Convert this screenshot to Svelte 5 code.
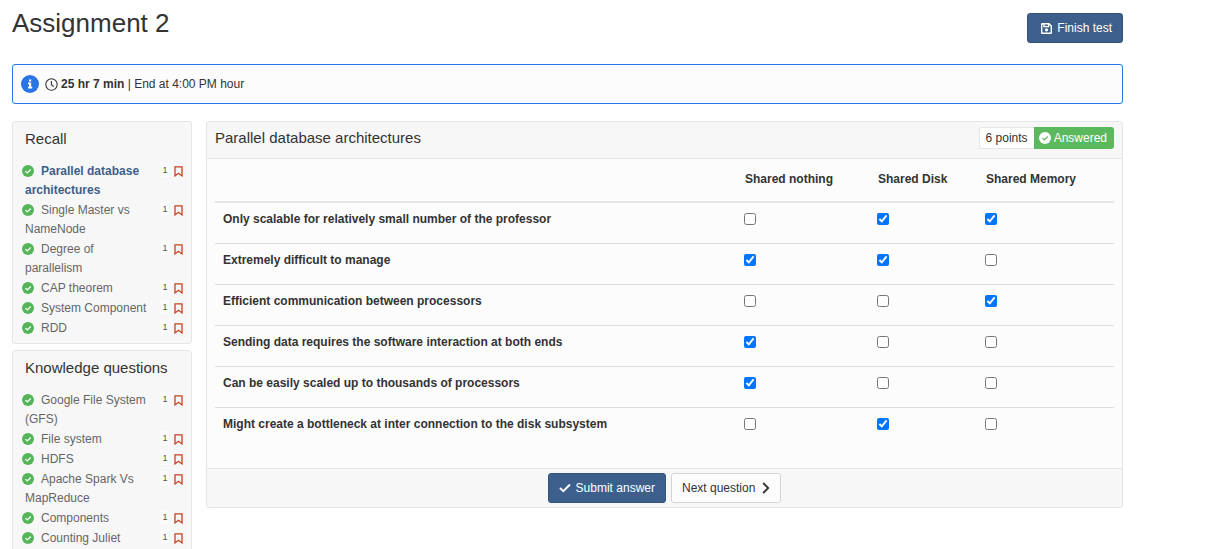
<script>
  const groups = [
    {
      title: 'Recall',
      items: [
        'Parallel database architectures',
        'Single Master vs NameNode',
        'Degree of parallelism',
        'CAP theorem',
        'System Component',
        'RDD'
      ]
    },
    {
      title: 'Knowledge questions',
      items: [
        'Google File System (GFS)',
        'File system',
        'HDFS',
        'Apache Spark Vs MapReduce',
        'Components',
        'Counting Juliet'
      ]
    }
  ];
  const current = 'Parallel database architectures';

  const options = ['Shared nothing', 'Shared Disk', 'Shared Memory'];
  let rows = $state([
    { label: 'Only scalable for relatively small number of the professor', marks: [false, true, true] },
    { label: 'Extremely difficult to manage', marks: [true, true, false] },
    { label: 'Efficient communication between processors', marks: [false, false, true] },
    { label: 'Sending data requires the software interaction at both ends', marks: [true, false, false] },
    { label: 'Can be easily scaled up to thousands of processors', marks: [true, false, false] },
    { label: 'Might create a bottleneck at inter connection to the disk subsystem', marks: [false, true, false] }
  ]);
</script>

{#snippet checkCircle(cls, disc, tick)}
  <svg class={cls} viewBox="0 0 12 12" aria-hidden="true">
    <circle cx="6" cy="6" r="6" fill={disc} />
    <path d="M3.4 6.1 5.3 7.9 8.7 4.5" fill="none" stroke={tick} stroke-width="1.3" />
  </svg>
{/snippet}

<div class="page">
  <header class="top">
    <h1>Assignment 2</h1>
    <button class="btn primary finish" type="button">
      <svg width="11" height="11" viewBox="0 0 11 11" fill="none" stroke="currentColor" stroke-width="1.4" aria-hidden="true">
        <path d="M.7 1.2q0-.5.5-.5H8l2.3 2.3v6.8q0 .5-.5.5H1.2q-.5 0-.5-.5z" />
        <path d="M3 .8v2.8h4.6V.8" />
        <circle cx="5.5" cy="6.9" r="1.2" fill="currentColor" stroke-width="1" />
      </svg>
      <span>Finish test</span>
    </button>
  </header>

  <div class="notice">
    <svg class="info" viewBox="0 0 18 18" aria-hidden="true">
      <circle cx="9" cy="9" r="9" fill="#2a75e6" />
      <path d="M8 4.5h2.2v2H8zM7 7.6h3.2v4.2h1v1.6H7v-1.6h1V9.2H7z" fill="#fff" />
    </svg>
    <svg class="clock" viewBox="0 0 13 13" fill="none" stroke="#333" aria-hidden="true">
      <circle cx="6.5" cy="6.5" r="5.7" stroke-width="1.1" />
      <path d="M6.4 3v3.8l2.3 1.7" stroke-width="1.1" />
    </svg>
    <span><b>25 hr 7 min</b> | End at 4:00 PM hour</span>
  </div>

  <div class="columns">
    <nav class="side" aria-label="Questions">
      {#each groups as group}
        <section class="panel group">
          <h2>{group.title}</h2>
          <ul>
            {#each group.items as item}
              <li>
                <a href="#question" class:current={item === current}>{@render checkCircle('done', '#55b559', '#fff')}{item}</a>
                <span class="count">1</span>
                <svg class="bookmark" viewBox="0 0 9 11" aria-hidden="true">
                  <path d="M1 .9h7v9L4.5 7.3 1 9.9z" fill="none" stroke="#c5431f" stroke-width="1.3" />
                </svg>
              </li>
            {/each}
          </ul>
        </section>
      {/each}
    </nav>

    <main class="panel question">
      <div class="head">
        <h2>Parallel database architectures</h2>
        <div class="status">
          <span class="points">6 points</span>
          <span class="answered">{@render checkCircle('mark', '#fff', '#5cb85c')}Answered</span>
        </div>
      </div>

      <div class="body">
        <table>
          <thead>
            <tr>
              <td></td>
              {#each options as option}
                <th scope="col">{option}</th>
              {/each}
            </tr>
          </thead>
          <tbody>
            {#each rows as row}
              <tr>
                <th scope="row">{row.label}</th>
                {#each options as option, i}
                  <td><input type="checkbox" aria-label={`${row.label}: ${option}`} bind:checked={row.marks[i]} /></td>
                {/each}
              </tr>
            {/each}
          </tbody>
        </table>
      </div>

      <footer class="actions">
        <button class="btn primary" type="button">
          <svg width="12" height="10" viewBox="0 0 12 10" aria-hidden="true">
            <path d="M1 5 4.3 8.2 11 1.5" fill="none" stroke="currentColor" stroke-width="2" />
          </svg>
          <span>Submit answer</span>
        </button>
        <button class="btn plain" type="button">
          <span>Next question</span>
          <svg width="8" height="12" viewBox="0 0 8 12" aria-hidden="true">
            <path d="M1.2 1 6.2 6 1.2 11" fill="none" stroke="currentColor" stroke-width="1.8" />
          </svg>
        </button>
      </footer>
    </main>
  </div>
</div>

<style>
  :global(body) {
    background: #fff;
  }
  .page {
    box-sizing: border-box;
    padding: 8px 95px 0 12px;
    font: 12px/18px "Liberation Sans", Arial, sans-serif;
    color: #333;
  }
  h1, h2, ul {
    margin: 0;
    padding: 0;
    font-weight: 400;
  }
  h1 {
    font-size: 26px;
    line-height: 30px;
  }
  h2 {
    font-size: 15px;
    line-height: 18px;
  }
  .top {
    display: flex;
    justify-content: space-between;
    align-items: flex-start;
  }
  .btn {
    display: inline-flex;
    align-items: center;
    gap: 5px;
    box-sizing: border-box;
    height: 30px;
    padding: 0 10px;
    border: 1px solid #34547c;
    border-radius: 3px;
    font: inherit;
    cursor: pointer;
  }
  .primary {
    background: #3d5f8c;
    color: #fff;
  }
  .plain {
    gap: 7px;
    background: #fcfcfc;
    border-color: #d4d4d4;
    color: #333;
  }
  .finish {
    margin-top: 5px;
    padding: 0 10px 0 13px;
  }
  .notice {
    display: flex;
    align-items: center;
    box-sizing: border-box;
    min-height: 40px;
    margin-top: 21px;
    padding: 0 8px;
    border: 1px solid #2a75e6;
    border-radius: 3px;
    background: #fcfcfc;
  }
  .info {
    width: 18px;
    height: 18px;
    margin-right: 6px;
  }
  .clock {
    width: 13px;
    height: 13px;
    margin-right: 3px;
  }
  .columns {
    display: grid;
    grid-template-columns: 180px minmax(0, 1fr);
    gap: 14px;
    align-items: start;
    margin-top: 17px;
  }
  .panel {
    border: 1px solid #e6e6e6;
    border-radius: 3px;
    background: #f7f7f7;
  }
  .side {
    display: grid;
    gap: 6px;
  }
  .group {
    padding: 8px 8px 4px 12px;
  }
  .group h2 {
    margin-bottom: 14px;
  }
  ul {
    list-style: none;
  }
  li {
    display: flex;
    align-items: flex-start;
    padding-bottom: 1px;
  }
  a {
    flex: 1;
    min-width: 0;
    padding-right: 12px;
    line-height: 19px;
    color: #666;
    text-decoration: none;
  }
  .current {
    color: #3d5f8c;
    font-weight: 700;
  }
  .done {
    width: 12px;
    height: 12px;
    margin: 0 7px 0 -3px;
    vertical-align: -2px;
  }
  .count {
    width: 8px;
    margin: 1px 5px 0 0;
    background: #fbfbfb;
    font-size: 9px;
    line-height: 14px;
    text-align: center;
    color: #555;
  }
  .bookmark {
    width: 9px;
    height: 11px;
    margin-top: 4px;
  }
  .head {
    display: flex;
    justify-content: space-between;
    align-items: center;
    padding: 5px 8px 9px;
    border-bottom: 1px solid #e6e6e6;
  }
  .status {
    display: flex;
    line-height: 20px;
  }
  .points {
    padding: 0 6px;
    border: 1px solid #e6e6e6;
    border-right: 0;
    border-radius: 3px 0 0 3px;
    background: #fff;
  }
  .answered {
    display: flex;
    align-items: center;
    gap: 3px;
    padding: 0 7px 0 5px;
    border-radius: 0 3px 3px 0;
    background: #5cb85c;
    color: #fff;
  }
  .mark {
    width: 12px;
    height: 12px;
  }
  .body {
    padding: 0 8px 20px;
    background: #fcfcfc;
  }
  table {
    width: 100%;
    border-collapse: separate;
    border-spacing: 0;
    table-layout: fixed;
  }
  th, td {
    box-sizing: border-box;
    height: 41px;
    padding: 7px 8px 0;
    border-top: 1px solid #ddd;
    text-align: left;
    vertical-align: top;
  }
  thead th, thead td {
    height: 43px;
    padding-top: 11px;
    border-top: 0;
    border-bottom: 1px solid #e6e6e6;
  }
  tbody tr:first-child > * {
    border-top-color: #e6e6e6;
  }
  thead th:nth-child(2) {
    width: 133px;
  }
  thead th:nth-child(3) {
    width: 108px;
  }
  thead th:nth-child(4) {
    width: 136px;
  }
  input {
    display: block;
    width: 12px;
    height: 12px;
    margin: 3px 0 0 -1px;
  }
  .actions {
    display: flex;
    justify-content: center;
    gap: 5px;
    padding: 4px 0;
    border-top: 1px solid #e6e6e6;
  }
</style>
